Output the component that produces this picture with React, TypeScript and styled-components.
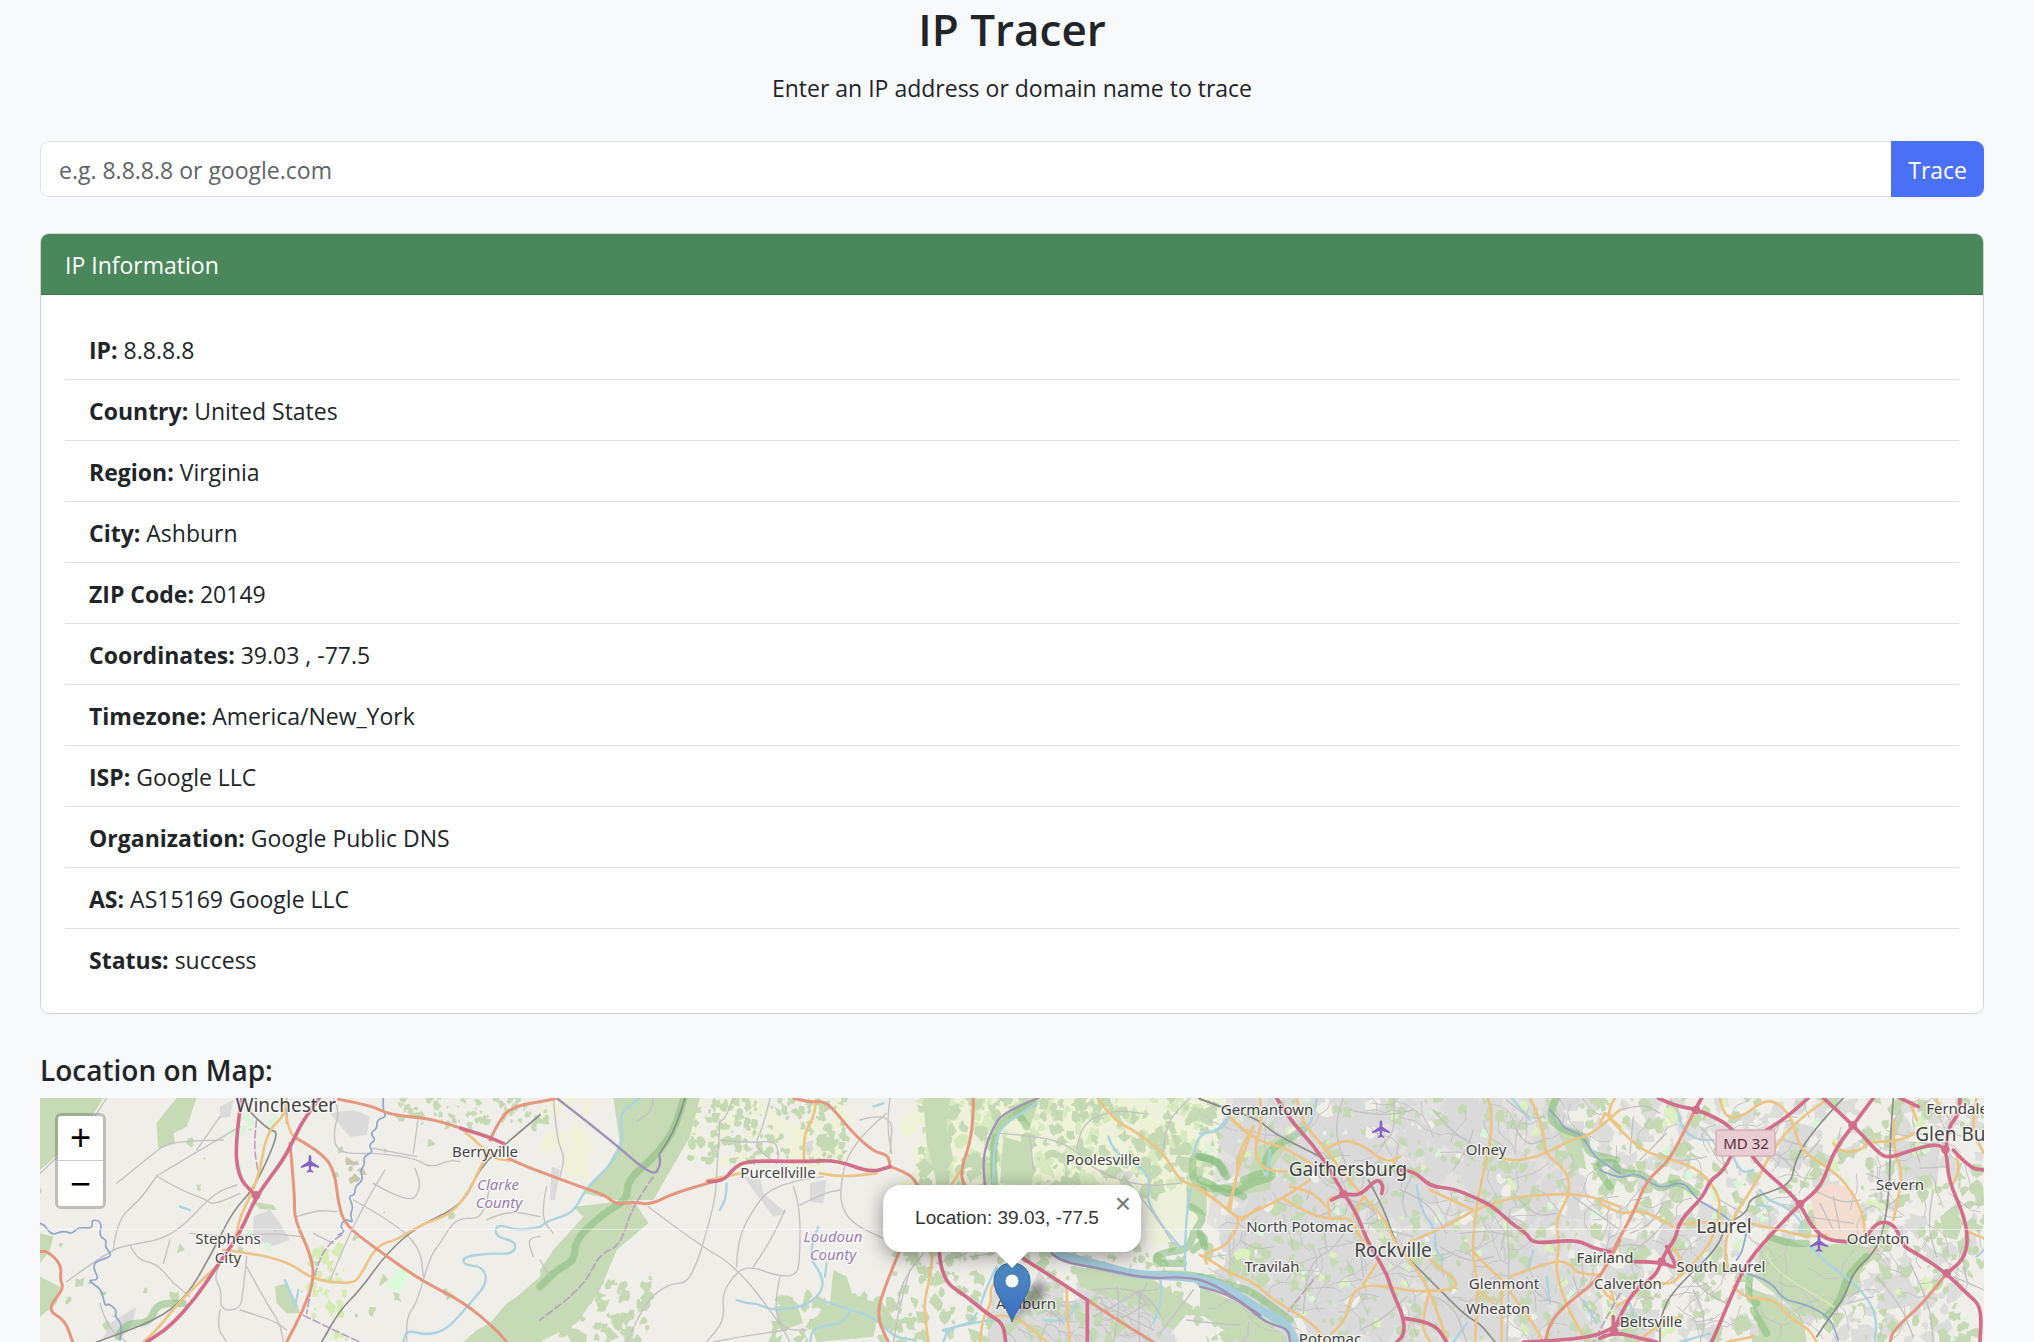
import React from "react";
import styled, { createGlobalStyle } from "styled-components";

const GlobalStyle = createGlobalStyle`
  *, *::before, *::after { box-sizing: border-box; }
  body {
    margin: 0;
    background: #f8f9fb;
    color: #212529;
    font-family: "Segoe UI", "Open Sans", "Noto Sans", sans-serif;
    font-size: 23px;
    line-height: 36px;
  }
`;

const Page = styled.main`
  height: 100vh;
  overflow: hidden;
  display: flex;
  flex-direction: column;
  padding: 0 50px 0 40px;
`;

const Header = styled.header`
  text-align: center;
  margin-bottom: 35px;
`;

const Title = styled.h1`
  margin: 0 0 12px;
  font-size: 44px;
  font-weight: 600;
  line-height: 58px;
`;

const Subtitle = styled.p`
  margin: 0;
`;

const SearchForm = styled.form`
  display: flex;
  height: 56px;
  margin-bottom: 36px;
  flex-shrink: 0;
`;

const SearchInput = styled.input`
  flex: 1;
  min-width: 0;
  padding: 2px 18px 0;
  border: 1px solid #dee2e6;
  border-right: 0;
  border-radius: 9px 0 0 9px;
  background: #fff;
  color: #212529;
  font: inherit;
  &::placeholder { color: #5f6468; opacity: 1; }
`;

const TraceButton = styled.button`
  padding: 2px 17px 0;
  border: 0;
  border-radius: 0 9px 9px 0;
  background: #4a70f5;
  color: #fff;
  font: inherit;
  cursor: pointer;
`;

const Card = styled.section`
  flex-shrink: 0;
  border: 1px solid #d0d2d4;
  border-radius: 9px;
  background: #fff;
  overflow: hidden;
`;

const CardHeader = styled.h2`
  margin: 0;
  padding: 13px 24px 11px;
  border-bottom: 1px solid #407550;
  background: #4a875a;
  color: #fff;
  font-size: 23px;
  font-weight: 400;
  line-height: 36px;
`;

const InfoList = styled.ul`
  list-style: none;
  margin: 0;
  padding: 24px;
`;

const InfoRow = styled.li`
  padding: 13px 24px 11px;
  border-bottom: 1px solid #dee2e6;
  &:last-child { border-bottom: 0; }
`;

const MapHeading = styled.h2`
  margin: 38px 0 10px;
  font-size: 28px;
  font-weight: 600;
  line-height: 36px;
`;

const MapFrame = styled.section`
  position: relative;
  flex: 1;
  min-height: 0;
  overflow: hidden;
  background: #f0eee9;
`;

const MapDrawing = styled.svg`
  display: block;
  width: 100%;
  height: 100%;
`;

const ZoomControl = styled.div`
  position: absolute;
  top: 15px;
  left: 15px;
  display: flex;
  flex-direction: column;
  border: 3px solid rgba(0, 0, 0, 0.2);
  border-radius: 6px;
  background-clip: padding-box;
`;

const ZoomButton = styled.button<{ $first?: boolean }>`
  width: 45px;
  height: 45px;
  padding: 0;
  border: 0;
  border-bottom: ${(p) => (p.$first ? "1px solid #ccc" : "0")};
  border-radius: ${(p) => (p.$first ? "3px 3px 0 0" : "0 0 3px 3px")};
  background: #fff;
  color: #000;
  font-family: "Liberation Sans", Arial, sans-serif;
  font-size: 36px;
  line-height: 44px;
  cursor: pointer;
`;

const Popup = styled.div`
  position: absolute;
  top: 87px;
  left: 50%;
  transform: translateX(-50%);
  padding: 20px 42px 21px 32px;
  border-radius: 18px;
  background: #fff;
  box-shadow: 0 4px 20px rgba(0, 0, 0, 0.4);
  color: #333;
  font-family: "Liberation Sans", Arial, sans-serif;
  font-size: 19px;
  line-height: 26px;
  white-space: nowrap;
  &::after {
    content: "";
    position: absolute;
    top: 100%;
    left: 50%;
    transform: translateX(-50%);
    border: 16px solid transparent;
    border-top: 16px solid #fff;
    border-bottom: 0;
  }
`;

const CloseButton = styled.button`
  position: absolute;
  top: 0;
  right: 0;
  width: 36px;
  height: 36px;
  padding: 0;
  border: 0;
  background: none;
  color: #757575;
  font-family: "Liberation Sans", Arial, sans-serif;
  font-size: 28px;
  line-height: 38px;
  cursor: pointer;
`;

const Marker = styled.svg`
  position: absolute;
  top: 163px;
  left: 50%;
  width: 38px;
  height: 62px;
  transform: translateX(-50%);
  overflow: visible;
`;

const PlaceName = styled.text<{ $size: number; $county?: boolean }>`
  font-family: "Noto Sans", "Open Sans", sans-serif;
  font-size: ${(p) => p.$size}px;
  font-style: ${(p) => (p.$county ? "italic" : "normal")};
  fill: ${(p) => (p.$county ? "#9c7fae" : "#444")};
  stroke: rgba(255, 255, 255, 0.6);
  stroke-width: 3px;
  stroke-linejoin: round;
  paint-order: stroke;
  text-anchor: middle;
`;

const info: [string, string][] = [
  ["IP", "8.8.8.8"],
  ["Country", "United States"],
  ["Region", "Virginia"],
  ["City", "Ashburn"],
  ["ZIP Code", "20149"],
  ["Coordinates", "39.03 , -77.5"],
  ["Timezone", "America/New_York"],
  ["ISP", "Google LLC"],
  ["Organization", "Google Public DNS"],
  ["AS", "AS15169 Google LLC"],
  ["Status", "success"],
];

/* ---------- map geometry ---------- */

type Sheet = { dx: number; lines: Record<string, string[]> };

const strokes: Record<string, { color: string; width: number; dash?: string; opacity?: number }> = {
  minor: { color: "#c3c2c2", width: 4 },
  park: { color: "#86bd7c", width: 22, opacity: 0.55 },
  river: { color: "#abd3e0", width: 7 },
  wide: { color: "#a6cddb", width: 26 },
  creek: { color: "#8fa5cc", width: 5 },
  border: { color: "#a291b5", width: 7 },
  dashed: { color: "#b9a3bd", width: 5, dash: "22 10" },
  rail: { color: "#8d8d8b", width: 5 },
  yellow: { color: "#ecc486", width: 8 },
  trunk: { color: "#e3977e", width: 9 },
  motorway: { color: "#d16f8a", width: 11 },
};

const order = ["park", "wide", "river", "minor", "creek", "border", "dashed", "rail", "yellow", "trunk", "motorway"];

const sheets: Sheet[] = [
  {
    dx: 0,
    lines: {
      motorway: [
        "605,24 585,160 595,260 635,306 652,318",
        "838,24 790,90 765,140 730,210 650,315 600,430 530,530 470,620 390,710 320,756",
        "1262,115 1330,135 1390,160",
      ],
      trunk: [
        "895,28 990,45 1050,75 1170,85 1265,115",
        "1350,150 1385,75 1430,48 1500,35",
        "1405,205 1440,222 1500,245",
        "770,145 850,190 885,250 895,340 915,405 1000,470 1140,570 1270,635 1370,720 1400,756",
        "750,160 765,320 762,385 815,500 822,570 790,660 740,756",
        "0,485 20,480 65,525 60,570 72,595 20,660 75,690 98,756",
      ],
      yellow: [
        "740,24 738,75 680,125 655,270 600,380 590,430 575,470",
        "738,75 750,130 765,140",
        "550,480 620,487 745,515 820,570 935,582 960,560 1010,465 1070,450 1140,405 1235,372 1290,300 1345,180",
        "1262,115 1300,145 1360,205 1410,212",
        "540,520 430,620 350,720 310,756",
      ],
      rail: [
        "630,65 685,122 720,125 640,300 580,360 510,500 440,620 350,690 170,756",
        "740,24 740,100",
        "1500,75 1410,150 1320,230 1270,345 1130,410 1040,490 960,600 900,660 845,756",
      ],
      creek: [
        "0,400 15,405 22,420 40,435 60,425 80,425 95,432 115,412 150,415 158,405 155,392 170,390 185,400 178,440 200,450 195,470 205,480 215,500 165,515 160,535 178,570 145,570 160,582 185,600 195,650 205,640 230,660 225,680 245,700 240,750",
        "1030,24 1028,60 1040,80 1010,90 1012,115 990,130 1008,150 985,165 1000,185 970,200 975,225 960,240 970,270 945,290 945,315 925,318 940,350 930,375 940,400 915,385 900,410 915,425 895,435",
      ],
      dashed: ["905,435 860,460 820,560 800,670", "790,676 880,720 960,756", "650,90 640,160 655,250"],
      river: [
        "1500,410 1440,425 1370,400 1365,440 1430,455 1420,492 1350,490 1270,500 1270,525 1330,530 1342,580 1290,640 1220,720 1160,735 1100,720 1090,756",
        "735,570 760,630 770,650", "775,600 765,650", "450,360 420,350",
      ],
      park: ["235,740 250,700 330,700 350,640 430,640"],
      minor: [
        "200,24 150,110 0,250", "190,275 120,310", "230,280 340,190 390,155 550,150", "350,258 480,180 600,110",
        "350,258 420,300 500,330 520,345 600,310", "220,480 230,390 300,330 350,258", "80,575 210,480 270,465 400,440 520,310 590,285",
        "270,465 290,510 350,520 400,580 450,620", "370,520 390,450", "540,520 520,560 545,600 540,660 600,660 610,600 620,500",
        "540,660 530,710 560,756", "620,530 680,640 720,700 730,756", "770,380 830,360 890,365", "820,430 880,460",
        "880,24 900,60 880,120 890,190 1000,190", "1000,190 1120,200 1170,235 1230,210 1260,215",
        "1000,175 1130,200", "940,330 1050,390 1140,470 1150,560", "1000,280 1110,345 1145,290 1125,235",
        "1035,240 960,360 870,570", "1350,270 1340,390 1250,380 1200,460 1170,500 1130,640 1100,680 1100,756",
        "1135,80 1120,190", "1500,440 1460,440 1480,500", "470,180 540,80", "600,660 700,690 740,720", "450,430 560,440 700,430 780,440",
        "180,640 200,710 260,756", "1340,390 1400,360 1500,380",
      ],
    },
  },
  {
    dx: 1500,
    lines: {
      park: ["432,24 410,110 345,200 262,270 262,330 190,370 105,450 105,510 50,540 0,590"],
      motorway: ["505,275 550,275 580,235 620,212 790,215 890,210 990,248 1050,230"],
      trunk: [
        "0,245 120,290 195,315 230,345 280,335 330,345 400,310 520,275",
        "1050,230 1110,250 1135,290",
        "760,24 810,38 860,32 930,120 1000,185 1045,195 1050,230",
        "1300,24 1300,130 1260,245 1275,290",
        "1080,480 1030,600 1010,680 1045,756", "0,35 45,26",
      ],
      yellow: ["828,30 825,75 792,130 792,210", "500,272 600,250", "840,250 900,262 1010,250", "1230,290 1260,245"],
      rail: ["435,24 410,110 360,190"],
      border: ["50,24 200,140 340,262 362,225 358,195"],
      dashed: ["340,262 280,340 240,470 180,490 130,590 0,690"],
      river: [
        "300,24 250,60 240,90 250,140 220,220 140,290 100,370 30,390 0,410",
        "835,410 800,490 850,560 845,610 790,650 720,660 680,655 650,640 620,640 590,630", "845,630 930,660 1000,680 1060,740 1120,750",
        "930,660 920,700 820,710 810,756", "560,280 560,320 540,360", "1210,756 1220,715 1290,700 1310,670", "1000,50 1030,40", "860,520 855,560",
      ],
      minor: [
        "40,24 50,150 75,200 60,260", "540,90 530,260 525,330 490,460 470,520 440,580 390,580 320,630 260,756",
        "325,350 470,460 590,530 720,700 750,756", "590,530 590,450 650,340 690,300 770,270 850,260", "760,290 780,340 780,500 770,560 700,555 640,530 595,540 545,610 555,690 500,756",
        "735,360 700,440 640,530", "690,24 670,110 640,170 710,220", "580,24 560,80 535,100", "540,150 640,160 710,150 715,210",
        "1040,70 980,120 920,200 905,270 900,340 935,400 1030,445", "1050,24 1040,100 1055,190", "780,345 850,310 900,300",
        "340,24 340,60 290,95", "20,290 0,380 40,430", "1150,490 1090,560 1070,660", "720,560 700,650 730,720 800,720", "0,510 30,560",
        "520,756 600,740 740,720",
      ],
    },
  },
  {
    dx: 2460,
    lines: {
      park: [
        "520,40 440,80 405,130 398,200 405,290", "470,60 500,110", "600,500 720,530 830,556 1000,550 1100,590 1200,660",
        "1000,205 992,270 1040,300 1100,290 1150,320", "1010,200 1070,205 1090,250", "990,350 1040,370 1000,430 985,480 890,490 890,520 970,520", "1000,430 1050,440 1000,480",
        "1150,270 1200,250",
      ],
      wide: ["600,495 720,526 830,556 1000,560 1100,590 1200,670"],
      border: ["535,24 430,65 395,120 368,200 375,290", "575,490 600,515 720,535 860,566 980,560 1060,580 1200,675"],
      river: [
        "400,290 400,180 420,110 530,40", "745,140 760,190 860,240 870,290 860,330 900,400 960,470", "975,540 975,420 990,300",
        "1000,200 1010,130 1080,125 1110,80", "410,530 380,590 360,650", "900,560 910,620 880,700", "250,720 330,700 400,690", "550,690 620,700 650,640",
      ],
      motorway: [
        "238,490 245,570 320,620 380,670 430,700 437,756", "480,500 560,550 682,630", "682,630 682,756",
      ],
      trunk: ["682,630 780,695 880,756"],
      yellow: [
        "712,24 760,90 820,120 910,185 960,275 1010,285 1105,360 1145,390 1100,470 1030,490 1040,520",
        "218,490 210,570 190,640 205,756", "360,756 365,690 395,640 390,590 430,550", "400,680 450,670 520,720 560,756",
        "620,590 620,650 630,756", "1105,350 1135,260 1130,200 1180,110",
        "1110,80 1150,120 1200,150", "1145,390 1200,350",
      ],
      rail: ["1015,24 1080,50"],
      minor: [
        "0,90 100,60 90,190", "420,130 560,140 650,180 700,240 840,290 960,280", "650,180 660,100 760,60 850,70",
        "790,260 860,340 940,460", "910,185 915,100 990,24", "510,140 520,240", "320,490 230,520", "400,490 330,500",
        "520,590 560,650 610,700", "700,600 760,590 860,610 910,690", "720,620 750,690 800,680 860,640", "700,680 760,650 840,600",
        "1000,600 900,730", "980,690 1060,700 1140,705", "150,540 120,640 100,756", "560,700 540,756",
        "720,640 880,720", "760,756 780,650 770,590", "840,756 830,640 860,580",
      ],
    },
  },
  {
    dx: 3480,
    lines: {
      motorway: [
        "230,24 270,90 340,165 390,240 430,310 470,370 500,450 560,550 575,600 612,685 612,735 590,756",
        "612,685 700,695 740,756", "395,330 430,310 480,318 530,265 550,285 545,310",
        "600,240 640,240 690,290 760,295 830,325 880,350 940,405 980,430 1000,462 1130,448 1180,475 1230,485",
        "970,756 1100,750 1200,735 1260,700",
      ],
      trunk: ["1260,450 1220,530 1180,580 1090,650 1050,700 1035,756"],
      yellow: [
        "865,24 882,90 855,230 830,340 815,480 835,590 825,756", "95,90 160,150 250,170 340,225",
        "180,24 190,90 160,180 190,240 260,245", "290,24 300,90 380,180 430,250 490,320 550,380 580,450 630,510 690,600 740,750",
        "375,180 415,150 480,160 560,220 600,200", "160,110 110,240 90,360", "0,300 60,340 120,390 150,370 250,325 330,270",
        "250,325 320,370 400,390 450,380 470,430 520,480", "270,290 330,300 380,350", "630,455 740,410 820,360 940,320 1100,310 1180,320 1260,350",
        "690,300 820,360", "990,24 1030,110 1035,195 1100,240 1112,310 1065,390 1080,460 1065,540 1100,650 1160,756",
        "910,205 940,215 1030,195 1120,145 1165,140 1260,60", "1215,70 1260,110",
        "0,495 40,515 80,545 160,575 220,630 340,700 380,756", "395,730 440,690 450,620 490,585 570,590 650,607 800,595 690,510",
        "490,585 530,520", "815,480 870,540 910,570 940,620 1000,700 1030,756", "930,560 1060,510 1110,520 1130,550 1200,555",
        "905,580 905,756", "690,600 660,700 690,756", "390,380 380,330 400,320", "460,380 490,320", "590,200 570,250",
        "835,600 880,640",
      ],
      rail: ["0,28 60,48 180,90 220,130 370,205", "505,270 550,350 590,470 650,530 720,600 800,680 840,700 885,756"],
      park: [
        "310,120 260,150 210,180 190,230 230,260 150,280 90,320 30,280 0,270", "0,200 60,215 80,260", "0,560 100,590 150,600 270,690",
        "1070,24 1040,80 1090,120 1160,140 1160,190 1250,210", "1190,230 1230,290", "0,430 15,470",
      ],
      wide: ["0,575 90,600 180,660 260,700 285,756"],
      border: ["0,590 60,605 130,640 200,700 265,715 270,756"],
      river: [
        "350,24 340,100 290,130", "0,130 50,130 90,70", "650,285 660,360 710,420 700,470 730,510", "1000,480 985,540",
        "935,24 990,90", "1040,560 1050,640", "1150,630 1190,700", "760,756 800,700", "200,260 210,180",
      ],
      dashed: ["340,570 260,670", "1260,610 1180,756"],
      creek: ["1050,60 1080,90 1090,115 1150,135 1180,200 1260,250"],
      minor: [
        "430,24 410,80 410,150 440,230", "580,24 590,120 540,170", "700,60 760,130 830,170", "920,30 990,90 1035,80",
        "440,420 400,480 350,500 320,560 310,670", "380,480 370,400", "480,470 490,560", "600,300 680,330 740,430", "640,250 600,320 620,380",
        "920,756 930,520 920,420 930,360", "950,320 1000,380 1070,370", "1120,320 1260,420", "780,430 860,420 940,440", "940,100 970,170 1035,150",
        "620,620 560,680 480,720", "700,620 760,640 800,756", "980,560 1010,620 1080,640", "450,330 520,350 540,400 480,400",
        "460,350 500,330 530,370 500,390", "320,330 330,300", "350,380 410,360 400,340", "1120,560 1140,640 1200,680", "560,420 640,440",
        "720,470 800,520 880,500", "760,240 800,180 820,120", "450,60 540,80 640,60", "120,450 160,480 220,470", "250,540 300,520 350,500",
      ],
    },
  },
  {
    dx: 4680,
    lines: {
      motorway: [
        "175,24 220,46 290,58 365,92 400,120 450,190 490,240 550,290 600,342 635,410 680,450 740,455",
        "305,24 285,60", "625,24 570,75 500,120", "395,195 370,245 330,270 310,320 240,390 225,450 200,480 185,515 165,560 100,600 40,720",
        "670,24 760,105 840,195 870,203 930,182 1010,160 1040,180 1045,270 1090,370 1105,450 1090,510 1040,550",
        "820,24 760,105 700,185 665,290 600,342 530,415 450,505 410,580 360,700 335,756",
        "800,440 820,405 860,393 890,415 910,470 950,490 1040,550 1100,610 1145,650 1140,756",
        "1080,24 1080,70 1045,110 1038,180", "1060,180 1110,235 1152,240", "900,24 955,50", "100,515 185,515 235,540 200,470",
        "0,745 40,725 120,745 170,756", "40,725 40,680",
      ],
      trunk: ["285,60 235,160 200,220 140,270 100,370 60,440 0,560", "1040,550 980,630 880,720 870,756"],
      yellow: [
        "45,24 15,70 60,120 130,185 220,210 300,240 355,310 360,360 350,410 320,480 240,560", "15,70 0,100",
        "360,24 370,85 430,80 490,30 540,40 580,95 600,180 680,230 740,280 790,370 795,440", "680,30 580,95 500,210 480,260 400,380 375,450 380,540",
        "450,400 540,420 620,440 680,435", "230,405 290,395 370,400", "0,340 60,375 110,360 170,380 220,410",
        "700,160 720,190 790,180 800,155 900,155 980,110", "880,90 880,180 905,230 900,300 880,390", "1010,24 1020,80", "1130,24 1110,110 1152,190",
        "1070,200 1080,240 1060,280", "400,590 430,625 520,625 570,685 625,715 650,756", "0,590 50,650 30,600",
        "210,465 250,500 235,580 160,580", "1105,425 1152,445", "380,756 460,740", "110,756 180,700 240,680", "930,40 950,90", "50,650 110,610",
      ],
      rail: [
        "730,24 640,120 585,210 575,280 500,310 450,325 440,370 380,400 350,480 220,600 180,680 180,756",
        "880,24 870,150 870,280 855,400 830,480 760,545 735,620 690,680 650,740",
      ],
      park: [
        "0,220 40,210 60,250 120,250 150,270 180,300 230,270 290,310", "450,560 440,620 470,640", "680,680 720,640 740,560 800,500", "460,660 500,730",
        "510,440 560,460 620,460",
      ],
      creek: [
        "0,240 60,270 110,245 180,300 250,270 290,330 350,360 400,400", "440,420 430,480 410,510", "440,550 510,570 550,630 610,640 690,680 715,750",
      ],
      river: [
        "235,70 240,110 290,150 340,150", "400,200 420,250 460,240", "480,300 500,330 560,350 610,400 600,430", "630,470 680,520 740,560 800,620 830,680 825,756",
        "1130,500 1152,480", "90,640 105,700", "240,756 330,730", "470,345 510,350",
      ],
      minor: [
        "60,60 130,40 180,70", "100,80 90,190", "300,110 360,170 380,250", "420,120 470,170 550,200 600,260", "640,300 720,340 780,330",
        "660,340 700,420", "700,320 720,420", "620,380 760,400", "800,250 870,280 950,290", "960,235 1040,230", "1000,24 1050,90", "900,320 860,350",
        "930,520 990,640 1000,756", "1060,560 1152,600", "1090,510 1100,570", "550,150 620,170", "200,130 120,210", "190,340 160,400 90,430",
        "100,480 150,450 190,400", "260,540 300,600 380,640", "900,60 880,100", "280,600 320,680 300,756", "20,480 80,460 130,470", "830,560 900,640 940,740",
        "740,640 820,620", "940,160 960,220", "1000,300 980,400 1010,500", "660,150 610,210", "430,370 360,330", "740,130 720,180 690,200", "320,200 240,220 180,190",
      ],
    },
  },
];

const forests = [
  "0,24 190,24 150,90 110,120 70,180 0,240", "380,60 410,24 470,24 440,110 400,130 405,160 355,178 350,100", "0,430 40,440 30,480 0,520",
  "0,560 60,590 50,640 0,680", "1500,560 1430,620 1400,640 1350,700 1310,720 1270,756 1500,756", "640,335 700,345 710,360 660,358",
  "705,590 740,580 770,640 780,670 740,670 710,640", "420,460 435,480 410,490", "1030,550 1045,570 1015,590",
  "1720,24 1980,24 1950,140 1880,260 1840,330 1730,330 1630,310 1700,230 1740,160", "1600,350 1780,330 1825,400 1730,480 1680,600 1610,700 1500,756 1500,540 1540,480 1630,380",
  "2650,24 2730,24 2720,110 2740,210 2690,280 2660,160", "2380,540 2420,560 2440,620 2520,640 2500,740 2330,756 2310,700 2370,640",
  "2200,650 2270,640 2290,700 2230,720", "2890,140 2960,160 2990,240 2960,285 2880,280", "2900,50 3000,24 2970,110", "3100,530 3320,555 3460,650 3400,720 3310,650 3200,620 3120,590",
  "3480,590 3600,640 3740,740 3740,756 3600,756 3480,670", "3440,280 3500,290 3500,380 3440,350",
  "5190,430 5300,470 5450,455 5510,500 5460,540 5410,640 5340,690 5240,640 5140,560", "5120,590 5200,620 5290,690 5300,756 5160,756 5150,680", "5700,380 5740,350 5770,400 5750,450 5710,440",
  "5390,480 5480,480 5500,500 5440,560", "4540,100 4620,140 4640,240 4600,220",
  "3650,170 3720,140 3740,170 3700,230 3690,300 3560,320 3520,290 3620,270",
];

const towns = [
  "870,70 940,60 990,80 980,135 930,140", "540,50 580,30 570,80 540,85", "640,380 690,360 720,400 750,450 690,470 640,440", "210,700 290,650 270,720 190,745",
  "2110,260 2160,260 2170,310 2240,370 2200,380", "2310,280 2360,270 2350,340 2310,335", "2290,160 2320,150 2320,200 2290,195", "2330,170 2390,175 2370,210",
  "1535,230 1560,240 1545,330 1530,330", "3220,250 3290,240 3260,280", "3150,230 3190,240 3190,300",
  "2860,600 2960,600 3080,640 3220,600 3340,620 3370,690 3340,756 2840,756", "3160,590 3300,580 3440,640 3380,756 3150,756",
  "3570,60 3700,70 3850,40 4000,110 4080,220 3930,330 4000,480 4100,560 4050,700 3900,756 3720,700 3700,550 3650,420 3600,250",
  "3800,420 3900,440 3960,560 3820,610 3750,520", "4100,430 4300,380 4460,440 4560,560 4500,700 4300,756 4140,720 4180,560",
  "4260,60 4380,80 4360,280 4240,250", "4880,380 5040,360 5060,480 4900,560 4840,470", "4700,430 4830,460 4800,620 4690,600",
  "5240,90 5320,110 5280,240 5200,230", "5530,140 5700,170 5690,300 5580,280 5560,180", "5530,560 5600,550 5640,640 5540,660", "4720,650 4860,660 4840,756 4720,756",
];

/** Turns "x,y x,y" pairs into a path whose corners are rounded through the segment midpoints. */
function curve(points: string): string {
  const p = points.split(" ").map((s) => s.split(",").map(Number));
  let d = `M${p[0][0]} ${p[0][1]}`;
  for (let i = 1; i < p.length - 1; i++) {
    d += `Q${p[i][0]} ${p[i][1]} ${(p[i][0] + p[i + 1][0]) / 2} ${(p[i][1] + p[i + 1][1]) / 2}`;
  }
  const last = p[p.length - 1];
  return `${d}L${last[0]} ${last[1]}`;
}

function randomizer(seed: number) {
  let s = seed;
  return () => {
    s = (s * 1664525 + 1013904223) % 4294967296;
    return s / 4294967296;
  };
}

/** A single path holding many small ragged land-cover polygons inside one rectangle. */
function speckle(seed: number, x: number, y: number, w: number, h: number, count: number, size: number): string {
  const rnd = randomizer(seed);
  let d = "";
  for (let i = 0; i < count; i++) {
    const cx = x + rnd() * w;
    const cy = y + rnd() * h;
    const r = size * (0.3 + rnd());
    const sides = 8;
    for (let k = 0; k < sides; k++) {
      const a = (k / sides) * Math.PI * 2;
      const q = r * (0.35 + rnd() * 0.9);
      d += `${k ? "L" : "M"}${Math.round(cx + Math.cos(a) * q)} ${Math.round(cy + Math.sin(a) * q * 1.1)}`;
    }
    d += "Z";
  }
  return d;
}

const cover: [string, string][] = [
  ["#eff1d8", speckle(3, 1480, 24, 180, 240, 24, 30)],
  ["#eff1d8", speckle(4, 1900, 24, 500, 200, 60, 28)],
  ["#eef2d6", speckle(5, 2600, 24, 900, 290, 170, 32)],
  ["#d6e9bf", speckle(6, 2640, 24, 860, 270, 170, 19)],
  ["#dadada", speckle(7, 3560, 24, 1060, 732, 560, 36)],
  ["#dcdcdb", speckle(8, 4620, 24, 1200, 732, 330, 26)],
  ["#dadada", speckle(9, 2900, 580, 500, 176, 80, 30)],
  ["#c5dab4", speckle(10, 3600, 24, 1100, 732, 320, 17)],
  ["#c5dab4", speckle(11, 4660, 24, 1172, 732, 330, 21)],
  ["#c5dab4", speckle(12, 2640, 24, 900, 290, 230, 20)],
  ["#c5dab4", speckle(13, 1920, 24, 500, 190, 150, 13)],
  ["#c5dab4", speckle(14, 1080, 24, 440, 90, 80, 11)],
  ["#c5dab4", speckle(15, 2560, 480, 560, 276, 120, 18)],
  ["#c5dab4", speckle(16, 1500, 560, 340, 196, 70, 18)],
  ["#c5dab4", speckle(17, 0, 60, 1300, 660, 34, 13)],
  ["#c5dab4", speckle(18, 3120, 470, 560, 286, 120, 18)],
  ["#c5dab4", speckle(19, 2200, 620, 420, 136, 70, 20)],
  ["#d5ecb5", speckle(20, 800, 460, 120, 290, 40, 14)],
  ["#dcf0c0", speckle(21, 3480, 24, 2300, 732, 90, 17)],
  ["#d9f5d9", speckle(22, 3480, 24, 2300, 732, 70, 14)],
  ["#d9f5d9", speckle(23, 560, 60, 150, 460, 12, 16)],
  ["#c9c6ac", speckle(24, 920, 210, 50, 60, 5, 14)],
  ["#f0eee9", speckle(25, 3500, 24, 2300, 732, 110, 20)],
];

/** Short winding residential streets for the built-up east side. */
const streets = (() => {
  const rnd = randomizer(91);
  let d = "";
  for (let i = 0; i < 240; i++) {
    let x = 3560 + rnd() * 2260;
    let y = 30 + rnd() * 720;
    let a = rnd() * Math.PI * 2;
    d += `M${Math.round(x)} ${Math.round(y)}`;
    for (let k = 0; k < 4; k++) {
      a += (rnd() - 0.5) * 1.6;
      x += Math.cos(a) * 28;
      y += Math.sin(a) * 28;
      d += `L${Math.round(x)} ${Math.round(y)}`;
    }
  }
  for (let i = 0; i < 60; i++) {
    const x = 2880 + rnd() * 440;
    const y = 600 + rnd() * 140;
    d += `M${Math.round(x)} ${Math.round(y)}q${Math.round(rnd() * 50)} ${Math.round(rnd() * 50 - 25)} 40 ${Math.round(rnd() * 60 - 10)}`;
  }
  return d;
})();

const places: { name: string; x: number; y: number; size: number; county?: boolean }[] = [
  { name: "Winchester", x: 246, y: 14, size: 19 },
  { name: "Berryville", x: 445, y: 59, size: 15 },
  { name: "Clarke", x: 458, y: 92, size: 15, county: true },
  { name: "County", x: 459, y: 110, size: 15, county: true },
  { name: "Stephens", x: 188, y: 146, size: 15 },
  { name: "City", x: 188, y: 165, size: 15 },
  { name: "Purcellville", x: 738, y: 80, size: 15 },
  { name: "Loudoun", x: 793, y: 144, size: 15, county: true },
  { name: "County", x: 793, y: 162, size: 15, county: true },
  { name: "Ashburn", x: 986, y: 211, size: 15 },
  { name: "Poolesville", x: 1063, y: 67, size: 15 },
  { name: "Germantown", x: 1227, y: 17, size: 15 },
  { name: "Gaithersburg", x: 1308, y: 78, size: 19 },
  { name: "Olney", x: 1446, y: 57, size: 15 },
  { name: "North Potomac", x: 1260, y: 134, size: 15 },
  { name: "Rockville", x: 1353, y: 159, size: 19 },
  { name: "Travilah", x: 1232, y: 174, size: 15 },
  { name: "Glenmont", x: 1464, y: 191, size: 15 },
  { name: "Wheaton", x: 1458, y: 216, size: 15 },
  { name: "Potomac", x: 1290, y: 246, size: 15 },
  { name: "Fairland", x: 1565, y: 165, size: 15 },
  { name: "Calverton", x: 1588, y: 191, size: 15 },
  { name: "Laurel", x: 1684, y: 135, size: 19 },
  { name: "South Laurel", x: 1681, y: 174, size: 15 },
  { name: "Beltsville", x: 1611, y: 229, size: 15 },
  { name: "Severn", x: 1860, y: 92, size: 15 },
  { name: "Odenton", x: 1838, y: 146, size: 15 },
  { name: "Ferndale", x: 1917, y: 16, size: 15 },
  { name: "Glen Burnie", x: 1928, y: 43, size: 19 },
];

const airports = [
  [810, 222],
  [4023, 118],
  [5337, 460],
];

const plane =
  "M0 -27C3 -27 4 -22 4 -18L4 -8L27 7L27 12L4 5L3 16L10 23L10 26L0 23L-10 26L-10 23L-3 16L-4 5L-27 12L-27 7L-4 -8L-4 -18C-4 -22 -3 -27 0 -27Z";

const shield = { x: 1676, y: 32, width: 59, height: 26 };

function AreaMap() {
  return (
    <MapDrawing viewBox="0 0 1944 244" preserveAspectRatio="xMidYMin slice" role="img" aria-label="Map of northern Virginia">
      <g transform="translate(0 -8) scale(0.33333)" strokeLinecap="round" strokeLinejoin="round">
        <rect x="0" y="24" width="5832" height="732" fill="#f0eee9" />
        <path d="M2640 24H3560L3500 380L3340 480L3300 300L2660 280Z" fill="#edf0da" />
        <path d="M3560 24H4560L4640 300L4700 756H3760L3640 500L3500 400Z" fill="#e2e1df" />
        {towns.map((t) => <polygon key={t} points={t} fill="#dadada" />)}
        {cover.map(([fill, d]) => <path key={d.slice(0, 40)} d={d} fill={fill} />)}
        {forests.map((f) => <polygon key={f} points={f} fill="#c5dab5" />)}
        <polygon points="1075,535 1110,550 1078,610 1040,590" fill="#d9fbdc" />
        <polygon points="5310,310 5370,280 5420,290 5470,370 5470,440 5380,450 5330,420" fill="#f3dcd0" />
        <polygon points="5470,470 5520,475 5500,505" fill="#d8cfb8" />
        <path d={streets} fill="none" stroke="#c4c3c5" strokeWidth="3" />
        {order.map((kind) =>
          sheets.map((sheet) => (
            <g
              key={`${kind}${sheet.dx}`}
              transform={`translate(${sheet.dx} 0)`}
              fill="none"
              stroke={strokes[kind].color}
              strokeWidth={strokes[kind].width}
              strokeDasharray={strokes[kind].dash}
              opacity={strokes[kind].opacity}
            >
              {(sheet.lines[kind] || []).map((l) => <path key={l} d={curve(l)} />)}
            </g>
          ))
        )}
        <path d="M5180 490C5200 560 5330 610 5380 650" fill="none" stroke="#d5e6b8" strokeWidth="6" />
        {[[648, 316], [3910, 312], [5280, 342], [5438, 106], [5720, 550], [4865, 515], [4722, 722], [5716, 178], [4968, 60]].map(([x, y]) => (
          <circle key={x} cx={x} cy={y} r="13" fill="#d16f8a" />
        ))}
        {airports.map(([x, y]) => <path key={x} d={plane} transform={`translate(${x} ${y})`} fill="#8461c4" />)}
        <path d="M0 418H5832" stroke="#fff" strokeWidth="3" opacity="0.6" />
      </g>
      {places.map((p) => (
        <PlaceName key={p.name + p.x} x={p.x} y={p.y} $size={p.size} $county={p.county}>{p.name}</PlaceName>
      ))}
      <rect {...shield} rx="2" fill="#e8cdd3" stroke="#cf9aa8" />
      <text x="1706" y="51" textAnchor="middle" fontFamily="Noto Sans, sans-serif" fontSize="15" fill="#5c2e42">MD 32</text>
    </MapDrawing>
  );
}

function LocationMarker() {
  return (
    <Marker viewBox="0 0 38 62" aria-hidden="true">
      <defs>
        <linearGradient id="pin" x1="0" y1="0" x2="0" y2="1">
          <stop offset="0" stopColor="#4f8bc0" />
          <stop offset="1" stopColor="#3c6dc4" />
        </linearGradient>
        <filter id="soft" x="-50%" y="-50%" width="200%" height="200%">
          <feGaussianBlur stdDeviation="3" />
        </filter>
      </defs>
      <path d="M19 60L33 30Q46 16 52 24Q56 34 38 46Z" fill="#000" opacity="0.3" filter="url(#soft)" />
      <path
        d="M19 61C18 57 14 50 9 41C4 33 1 27 1 20C1 9 9 2 19 2C29 2 37 9 37 20C37 27 34 33 29 41C24 50 20 57 19 61Z"
        fill="url(#pin)"
        stroke="#2f6ba5"
        strokeWidth="1"
      />
      <circle cx="19" cy="20" r="7" fill="#fff" stroke="#3f78b4" strokeWidth="1" />
    </Marker>
  );
}

export default function App() {
  return (
    <>
      <GlobalStyle />
      <Page>
        <Header>
          <Title>IP Tracer</Title>
          <Subtitle>Enter an IP address or domain name to trace</Subtitle>
        </Header>
        <SearchForm onSubmit={(e) => e.preventDefault()}>
          <SearchInput type="text" aria-label="IP address or domain name" placeholder="e.g. 8.8.8.8 or google.com" />
          <TraceButton type="submit">Trace</TraceButton>
        </SearchForm>
        <Card>
          <CardHeader>IP Information</CardHeader>
          <InfoList>
            {info.map(([label, value]) => (
              <InfoRow key={label}>
                <strong>{label}:</strong> {value}
              </InfoRow>
            ))}
          </InfoList>
        </Card>
        <MapHeading>Location on Map:</MapHeading>
        <MapFrame aria-label="Location map">
          <AreaMap />
          <LocationMarker />
          <Popup>
            Location: 39.03, -77.5
            <CloseButton type="button" aria-label="Close popup">×</CloseButton>
          </Popup>
          <ZoomControl>
            <ZoomButton type="button" $first aria-label="Zoom in">+</ZoomButton>
            <ZoomButton type="button" aria-label="Zoom out">−</ZoomButton>
          </ZoomControl>
        </MapFrame>
      </Page>
    </>
  );
}
